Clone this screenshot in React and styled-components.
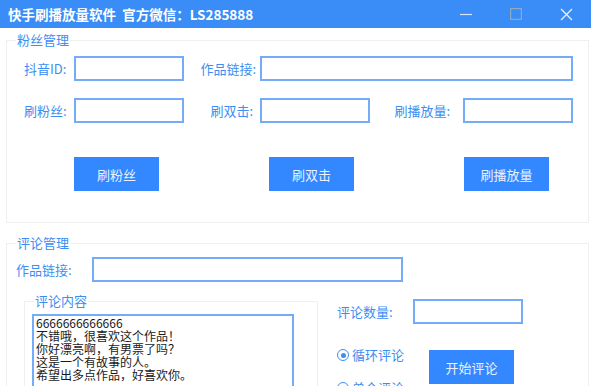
import React from 'react';
import styled, { createGlobalStyle } from 'styled-components';

const GlobalStyle = createGlobalStyle`
  html, body {
    margin: 0;
    padding: 0;
    background: #ffffff;
    overflow: hidden;
  }
  body {
    font-family: "Noto Sans CJK SC", "Noto Sans", sans-serif;
  }
`;

const blue = '#3a8cf6';
const labelBlue = '#3d8ef2';
const inputBorder = '#74acf8';

const Window = styled.div`
  width: 591px;
  height: 386px;
  overflow: hidden;
  background: #fff;
`;

const TitleBar = styled.div`
  height: 28px;
  background: ${blue};
  display: flex;
  align-items: center;
  padding-left: 8px;
`;

const Title = styled.div`
  flex: 1;
  color: #fff;
  font-size: 13.5px;
  font-weight: 700;
  white-space: pre;
  line-height: 28px;
`;

const Controls = styled.div`
  display: flex;
  align-items: center;
  height: 28px;
`;

const CtrlBtn = styled.div`
  width: 50px;
  height: 28px;
  display: flex;
  align-items: center;
  justify-content: center;
`;

const Body = styled.div`
  padding: 0 2px 0 6px;
`;

const Group = styled.fieldset`
  margin: ${({ $top }) => $top}px 0 0 0;
  padding: 0 0 0 ${({ $pl }) => $pl || 0}px;
  border: 1px solid #efefef;
  height: ${({ $h }) => $h}px;
  width: ${({ $w }) => ($w ? `${$w}px` : 'auto')};
  box-sizing: border-box;
  min-width: 0;
`;

const Legend = styled.legend`
  margin-left: ${({ $ml }) => $ml || 0}px;
  padding: 0 1px;
  font-size: 13px;
  line-height: 14px;
  color: ${labelBlue};
`;

const Row = styled.div`
  display: flex;
  align-items: center;
  margin-top: ${({ $mt }) => $mt || 0}px;
  padding-left: ${({ $pl }) => $pl || 0}px;
`;

const Label = styled.div`
  width: ${({ $w }) => $w}px;
  box-sizing: border-box;
  text-align: ${({ $right }) => ($right ? 'right' : 'left')};
  padding-right: ${({ $pr }) => $pr || 0}px;
  font-size: 13px;
  color: ${labelBlue};
  white-space: nowrap;
`;

const Input = styled.input`
  width: ${({ $w }) => $w}px;
  height: 25px;
  box-sizing: border-box;
  border: 2px solid ${inputBorder};
  outline: none;
  padding: 0 4px;
  margin: 0;
  background: #fff;
`;

const ButtonRow = styled.div`
  display: flex;
  gap: 110px;
  padding-left: 67px;
  margin-top: 34px;
`;

const Button = styled.button`
  width: 85px;
  height: 34px;
  border: none;
  background: #3388ff;
  color: #e9f1ff;
  font-family: "Noto Sans CJK SC", sans-serif;
  font-size: 13px;
  padding: 0;
  margin: 0;
  flex-shrink: 0;
`;

const Split = styled.div`
  display: flex;
  margin-top: 12px;
  padding-left: 17px;
`;

const TextArea = styled.textarea`
  display: block;
  width: 262px;
  height: 90px;
  margin: 6px 0 0 0;
  box-sizing: border-box;
  border: 2px solid ${inputBorder};
  outline: none;
  resize: none;
  padding: 0 2px;
  font-family: "Noto Sans CJK SC", sans-serif;
  font-size: 12px;
  line-height: 13px;
  color: #1a1a1a;
  overflow: hidden;
`;

const Side = styled.div`
  display: flex;
  flex-direction: column;
  padding-left: 19px;
  padding-top: 5px;
`;

const Bottom = styled.div`
  display: flex;
  margin-top: 26px;
`;

const Radios = styled.div`
  width: 92px;
  display: flex;
  flex-direction: column;
  gap: 17px;
  margin-top: -3px;
`;

const Radio = styled.div`
  display: flex;
  align-items: center;
  gap: 3px;
  font-size: 13px;
  line-height: 16px;
  color: ${labelBlue};
`;

const Circle = styled.span`
  width: 12px;
  height: 12px;
  box-sizing: border-box;
  border: 1.5px solid ${labelBlue};
  border-radius: 50%;
  display: flex;
  align-items: center;
  justify-content: center;
  &::after {
    content: '';
    width: 5px;
    height: 5px;
    border-radius: 50%;
    background: ${({ $on }) => ($on ? labelBlue : 'transparent')};
  }
`;

const comments = `6666666666666
不错哦，很喜欢这个作品！
你好漂亮啊，有男票了吗？
这是一个有故事的人。
希望出多点作品，好喜欢你。`;

export default function App() {
  return (
    <Window>
      <GlobalStyle />
      <TitleBar>
        <Title>快手刷播放量软件  官方微信：LS285888</Title>
        <Controls>
          <CtrlBtn>
            <svg width="12" height="12" viewBox="0 0 12 12">
              <line x1="0" y1="6.5" x2="12" y2="6.5" stroke="#d6e6ff" strokeWidth="1.2" />
            </svg>
          </CtrlBtn>
          <CtrlBtn>
            <svg width="12" height="12" viewBox="0 0 12 12">
              <rect x="0.6" y="0.6" width="10.8" height="10.8" fill="none" stroke="#8fa8c8" strokeWidth="1.2" />
            </svg>
          </CtrlBtn>
          <CtrlBtn>
            <svg width="13" height="13" viewBox="0 0 13 13">
              <path d="M1 1 L12 12 M12 1 L1 12" stroke="#e8f0ff" strokeWidth="1.3" />
            </svg>
          </CtrlBtn>
        </Controls>
      </TitleBar>
      <Body>
        <Group $top={5} $h={190}>
          <Legend $ml={9}>粉丝管理</Legend>
          <Row $mt={9} $pl={17}>
            <Label $w={50}>抖音ID:</Label>
            <Input $w={110} />
            <Label $w={76} $right $pr={4}>作品链接:</Label>
            <Input $w={313} />
          </Row>
          <Row $mt={17} $pl={17}>
            <Label $w={50}>刷粉丝:</Label>
            <Input $w={110} />
            <Label $w={76} $right $pr={7}>刷双击:</Label>
            <Input $w={110} />
            <Label $w={93} $right $pr={13}>刷播放量:</Label>
            <Input $w={110} />
          </Row>
          <ButtonRow>
            <Button>刷粉丝</Button>
            <Button>刷双击</Button>
            <Button>刷播放量</Button>
          </ButtonRow>
        </Group>
        <Group $top={13} $h={200}>
          <Legend $ml={9}>评论管理</Legend>
          <Row $mt={7} $pl={9}>
            <Label $w={76}>作品链接:</Label>
            <Input $w={311} />
          </Row>
          <Split>
            <Group $top={0} $h={120} $w={294} $pl={7}>
              <Legend $ml={2}>评论内容</Legend>
              <TextArea defaultValue={comments} readOnly />
            </Group>
            <Side>
              <Row>
                <Label $w={76}>评论数量:</Label>
                <Input $w={110} />
              </Row>
              <Bottom>
                <Radios>
                  <Radio>
                    <Circle $on />
                    循环评论
                  </Radio>
                  <Radio>
                    <Circle />
                    单个评论
                  </Radio>
                </Radios>
                <Button>开始评论</Button>
              </Bottom>
            </Side>
          </Split>
        </Group>
      </Body>
    </Window>
  );
}
